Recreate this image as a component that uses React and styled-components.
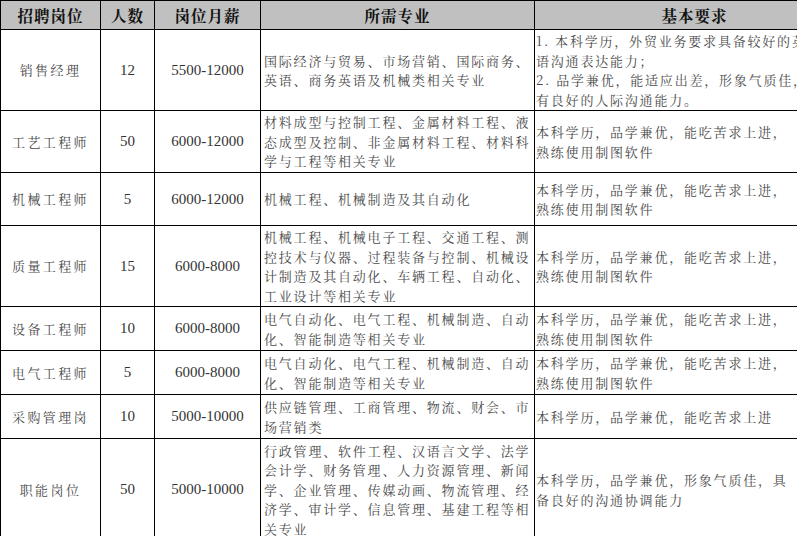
import styled, { createGlobalStyle } from "styled-components";

const cjk = `"Noto Serif CJK SC", "Noto Sans CJK SC", sans-serif`;

const GlobalStyle = createGlobalStyle`
  html, body {
    margin: 0;
    padding: 0;
    background: #ffffff;
    overflow: hidden;
  }
`;

const columns = ["招聘岗位", "人数", "岗位月薪", "所需专业", "基本要求"];

const skillReq = ["本科学历，品学兼优，能吃苦求上进，", "熟练使用制图软件"];
const elecMajor = ["电气自动化、电气工程、机械制造、自动", "化、智能制造等相关专业"];

const rows = [
  {
    height: 81,
    title: "销售经理",
    count: "12",
    pay: "5500-12000",
    major: ["国际经济与贸易、市场营销、国际商务、", "英语、商务英语及机械类相关专业"],
    req: [
      "1. 本科学历，外贸业务要求具备较好的英",
      "语沟通表达能力；",
      "2. 品学兼优，能适应出差，形象气质佳，",
      "有良好的人际沟通能力。",
    ],
  },
  {
    height: 62,
    title: "工艺工程师",
    count: "50",
    pay: "6000-12000",
    major: [
      "材料成型与控制工程、金属材料工程、液",
      "态成型及控制、非金属材料工程、材料科",
      "学与工程等相关专业",
    ],
    req: skillReq,
  },
  {
    height: 53,
    title: "机械工程师",
    count: "5",
    pay: "6000-12000",
    major: ["机械工程、机械制造及其自动化"],
    req: skillReq,
  },
  {
    height: 81,
    title: "质量工程师",
    count: "15",
    pay: "6000-8000",
    major: [
      "机械工程、机械电子工程、交通工程、测",
      "控技术与仪器、过程装备与控制、机械设",
      "计制造及其自动化、车辆工程、自动化、",
      "工业设计等相关专业",
    ],
    req: skillReq,
  },
  { height: 44, title: "设备工程师", count: "10", pay: "6000-8000", major: elecMajor, req: skillReq },
  { height: 44, title: "电气工程师", count: "5", pay: "6000-8000", major: elecMajor, req: skillReq },
  {
    height: 44,
    title: "采购管理岗",
    count: "10",
    pay: "5000-10000",
    major: ["供应链管理、工商管理、物流、财会、市", "场营销类"],
    req: ["本科学历，品学兼优，能吃苦求上进"],
  },
  {
    height: 102,
    title: "职能岗位",
    count: "50",
    pay: "5000-10000",
    major: [
      "行政管理、软件工程、汉语言文学、法学",
      "会计学、财务管理、人力资源管理、新闻",
      "学、企业管理、传媒动画、物流管理、经",
      "济学、审计学、信息管理、基建工程等相",
      "关专业",
    ],
    req: ["本科学历，品学兼优，形象气质佳，具", "备良好的沟通协调能力"],
  },
];

const Lines = ({ lines }) => (
  <TextBlock>
    {lines.map((line, i) => (
      <Line key={i}>{line}</Line>
    ))}
  </TextBlock>
);

const App = () => {
  return (
    <>
      <GlobalStyle />
      <Sheet $rows={rows.map((r) => r.height + "px").join(" ")}>
        {columns.map((c) => (
          <HeadCell key={c}>{c}</HeadCell>
        ))}
        {rows.map((r) => [
          <Cell key={r.title + "t"} $center $wide>
            {r.title}
          </Cell>,
          <NumCell key={r.title + "c"}>{r.count}</NumCell>,
          <NumCell key={r.title + "p"}>{r.pay}</NumCell>,
          <Cell key={r.title + "m"} $pad="3px">
            <Lines lines={r.major} />
          </Cell>,
          <Cell key={r.title + "r"} $pad="1px">
            <Lines lines={r.req} />
          </Cell>,
        ])}
      </Sheet>
    </>
  );
};

const Sheet = styled.div`
  display: grid;
  grid-template-columns: 100px 54px 106px 274px 320px;
  grid-template-rows: 29px ${(p) => p.$rows};
  width: max-content;
  border-top: 1px solid #000;
  border-left: 1px solid #000;
`;

const HeadCell = styled.div`
  display: flex;
  align-items: center;
  justify-content: center;
  box-sizing: border-box;
  background: #c0c0c0;
  border-right: 1px solid #000;
  border-bottom: 1px solid #000;
  font-family: ${cjk};
  font-weight: 700;
  font-size: 15.5px;
  letter-spacing: 1px;
  color: #111;
`;

const Cell = styled.div`
  display: flex;
  align-items: center;
  justify-content: ${(p) => (p.$center ? "center" : "flex-start")};
  text-align: ${(p) => (p.$center ? "center" : "left")};
  box-sizing: border-box;
  padding-left: ${(p) => p.$pad || "0"};
  border-right: 1px solid #000;
  border-bottom: 1px solid #000;
  font-family: ${cjk};
  font-size: 13px;
  line-height: 19.5px;
  letter-spacing: ${(p) => (p.$wide ? "2.4px" : "1.8px")};
  color: #4a4a4a;
  white-space: nowrap;
  overflow: hidden;
`;

const TextBlock = styled.div`
  display: block;
`;

const Line = styled.div`
  display: block;
  height: 19.5px;
`;

const NumCell = styled.div`
  display: flex;
  align-items: center;
  justify-content: center;
  box-sizing: border-box;
  border-right: 1px solid #000;
  border-bottom: 1px solid #000;
  font-family: "Liberation Serif", serif;
  font-size: 15px;
  color: #333;
  white-space: nowrap;
`;

export default App;
